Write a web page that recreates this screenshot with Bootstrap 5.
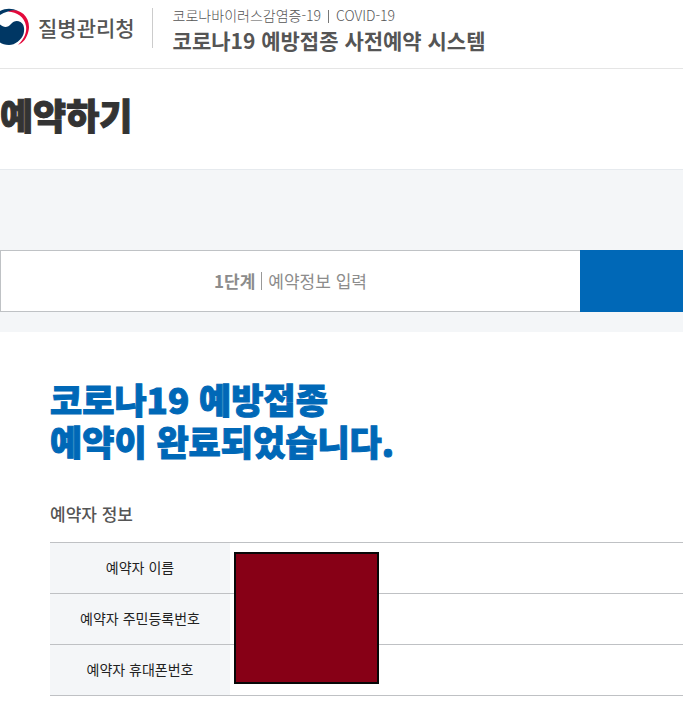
<!DOCTYPE html>
<html lang="ko">
<head>
<meta charset="utf-8">
<meta name="viewport" content="width=device-width, initial-scale=1">
<title>코로나19 예방접종 사전예약 시스템</title>
<link href="https://cdn.jsdelivr.net/npm/bootstrap@5.3.0/dist/css/bootstrap.min.css" rel="stylesheet">
<style>
body { font-family: "Noto Sans CJK KR", sans-serif; color: #222; background: #fff; overflow-x: hidden; }
.site-header { height: 69px; border-bottom: 1px solid #e5e5e5; }
.agency { color: #555; font-size: 21px; font-weight: 500; line-height: 30px; gap: 9px; margin-top: 8px; }
.agency svg { width: 29px; height: 38px; }
.agency-rule { width: 1px; height: 40px; background: #ccc; margin: 8px 20px 0 17px; }
.site-name { color: #555; margin-top: 5px; }
.site-name small { display: block; font-size: 14px; font-weight: 300; line-height: 20px; }
.site-name small i { display: inline-block; width: 1px; height: 13px; background: #777; margin: 0 7px; vertical-align: -2px; }
.site-name strong { display: block; font-size: 21px; font-weight: 700; line-height: 30px; }
.page-title { height: 100px; font-size: 36px; font-weight: 900; line-height: 90px; color: #333; -webkit-text-stroke: 1px currentColor; }
.steps-band { background: #f4f6f8; border-top: 1px solid #e6eaee; padding: 80px 0 20px; }
.step { height: 62px; font-size: 17px; line-height: 24px; }
.step-info { color: #8c8c8c; background: #fff; border: 1px solid #bfc2c5; border-right: 0; }
.step-info i { width: 1px; height: 18px; background: #999; margin: 0 6px; }
.step-done { width: 103px; background: #0068b7; }
.result { padding: 46px 0 0 50px; }
.result h2 { color: #0068b7; font-size: 35px; font-weight: 900; line-height: 42px; -webkit-text-stroke: 1px currentColor; }
.result h3 { color: #555; font-size: 17px; font-weight: 500; line-height: 24px; margin: 40px 0 16px; }
.person { --bs-table-bg: transparent; border-color: #bfc1c4; border-top: 1px solid #bfc1c4; }
.person th { width: 180px; height: 51px; padding: 6px 8px 8px; background: #f4f6f8; color: #222; font-size: 14px; font-weight: 400; line-height: 20px; }
.redaction { left: 184px; top: 10px; width: 145px; height: 132px; background: #870016; border: 2px solid #080808; }
</style>
<script src="https://cdn.jsdelivr.net/npm/bootstrap@5.3.0/dist/js/bootstrap.bundle.min.js"></script>
</head>
<body>
<header class="site-header d-flex align-items-start">
  <div class="agency d-flex align-items-center">
    <svg viewBox="0 0 29 38" aria-hidden="true">
      <path d="M0 3C6 0 12 0 18 3C12 2.500 6 3 0 7Z" fill="#003764"/>
      <path d="M8 3.500C13 1 19 2 23.500 6C28 10 30 17 28.500 23C27 30 23 35 18 37C24 31 27 25 26 18C24.500 9 17 4 8 3.500Z" fill="#e4093b"/>
      <path d="M0 16.500C4 20 8 19.500 11 16C13.500 13 17 12 20.500 14C24 16 25 21 23.500 26C21.500 32 15 37 9 37C5 37 2 36 0 34.500Z" fill="#003764"/>
    </svg>
    <span>질병관리청</span>
  </div>
  <div class="agency-rule"></div>
  <div class="site-name text-nowrap"><small>코로나바이러스감염증-19<i></i>COVID-19</small><strong>코로나19 예방접종 사전예약 시스템</strong></div>
</header>
<main>
  <h1 class="page-title m-0">예약하기</h1>
  <div class="steps-band">
    <div class="d-flex">
      <div class="step step-info flex-grow-1 d-flex align-items-center justify-content-center"><b>1단계</b><i></i><span>예약정보 입력</span></div>
      <div class="step step-done flex-shrink-0"></div>
    </div>
  </div>
  <section class="result">
    <h2 class="m-0">코로나19 예방접종<br>예약이 완료되었습니다.</h2>
    <h3>예약자 정보</h3>
    <div class="position-relative">
      <table class="table person align-middle mb-0">
        <tbody>
          <tr><th scope="row" class="text-center">예약자 이름</th><td></td></tr>
          <tr><th scope="row" class="text-center">예약자 주민등록번호</th><td></td></tr>
          <tr><th scope="row" class="text-center">예약자 휴대폰번호</th><td></td></tr>
        </tbody>
      </table>
      <div class="redaction position-absolute"></div>
    </div>
  </section>
</main>
</body>
</html>
